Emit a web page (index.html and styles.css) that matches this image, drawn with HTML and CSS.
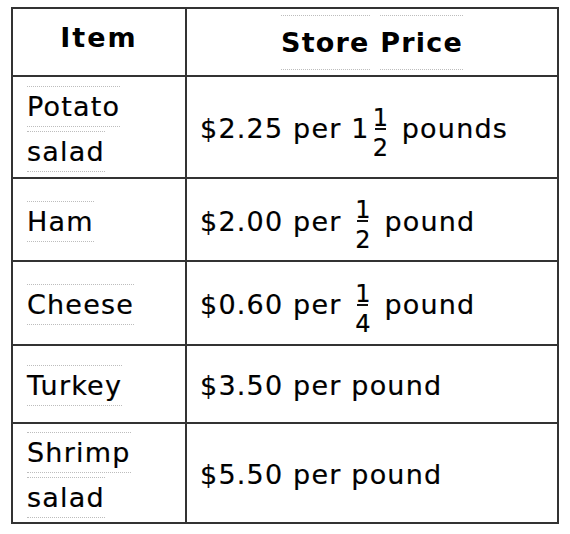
FILE: index.html
```html
<!DOCTYPE html>
<html lang="en">
<head>
<meta charset="utf-8">
<title>Store Prices</title>
<link rel="stylesheet" href="styles.css">
</head>
<body>
<div class="price-table">
  <div class="cell head item-head">Item</div>
  <div class="cell head"><span class="w">Store</span>&nbsp;<span class="w">Price</span></div>

  <div class="cell name"><div><span class="w">Potato</span><br><span class="w">salad</span></div></div>
  <div class="cell price"><div>$2.25 per 1<span class="frac mixed"><span class="num">1</span><span class="bar"></span><span class="den">2</span></span> pounds</div></div>

  <div class="cell name"><div><span class="w">Ham</span></div></div>
  <div class="cell price"><div>$2.00 per <span class="frac"><span class="num">1</span><span class="bar"></span><span class="den">2</span></span> pound</div></div>

  <div class="cell name"><div><span class="w">Cheese</span></div></div>
  <div class="cell price"><div>$0.60 per <span class="frac"><span class="num">1</span><span class="bar"></span><span class="den">4</span></span> pound</div></div>

  <div class="cell name"><div><span class="w">Turkey</span></div></div>
  <div class="cell price"><div>$3.50 per pound</div></div>

  <div class="cell name"><div><span class="w">Shrimp</span><br><span class="w">salad</span></div></div>
  <div class="cell price"><div>$5.50 per pound</div></div>
</div>
</body>
</html>
```

FILE: styles.css
```css
html, body {
  margin: 0;
  padding: 0;
  background: #ffffff;
}

body {
  font-family: "DejaVu Sans", Verdana, sans-serif;
  color: #000;
}

.price-table {
  display: grid;
  grid-template-columns: 174px 372px;
  grid-template-rows: 68px 102px 83px 84px 78px 100px;
  width: max-content;
  margin: 7px 0 0 11px;
  border-top: 2px solid #333;
  border-left: 2px solid #333;
}

.cell {
  box-sizing: border-box;
  display: flex;
  align-items: center;
  border-right: 2px solid #333;
  border-bottom: 2px solid #333;
  font-size: 27px;
  line-height: 45px;
  letter-spacing: 1.2px;
  white-space: nowrap;
  -webkit-text-stroke: 0.2px #000;
}

.head {
  justify-content: center;
  font-weight: bold;
  font-size: 27px;
  letter-spacing: 1.2px;
  -webkit-text-stroke: 0;
}

.item-head {
  padding-bottom: 10px;
  letter-spacing: 2px;
}

.name {
  padding: 3px 0 0 14px;
}

.price {
  padding: 3px 0 0 13px;
}

.w {
  padding: 4px 0 4px;
  border-top: 1px dotted #bdbdbd;
  border-bottom: 1px dotted #bdbdbd;
}

.head .w {
  padding: 4px 0 4px;
}

.frac {
  display: inline-flex;
  flex-direction: column;
  align-items: center;
  vertical-align: 12.4px;
  margin: 0 4px -8px 4px;
  font-size: 24px;
  line-height: 19px;
  letter-spacing: 0;
}

.frac.mixed {
  margin-left: 3px;
}

.num, .den {
  display: block;
}

.bar {
  display: block;
  width: 11px;
  height: 2px;
  background: #111;
}

.den {
  margin-top: 9px;
}
```
